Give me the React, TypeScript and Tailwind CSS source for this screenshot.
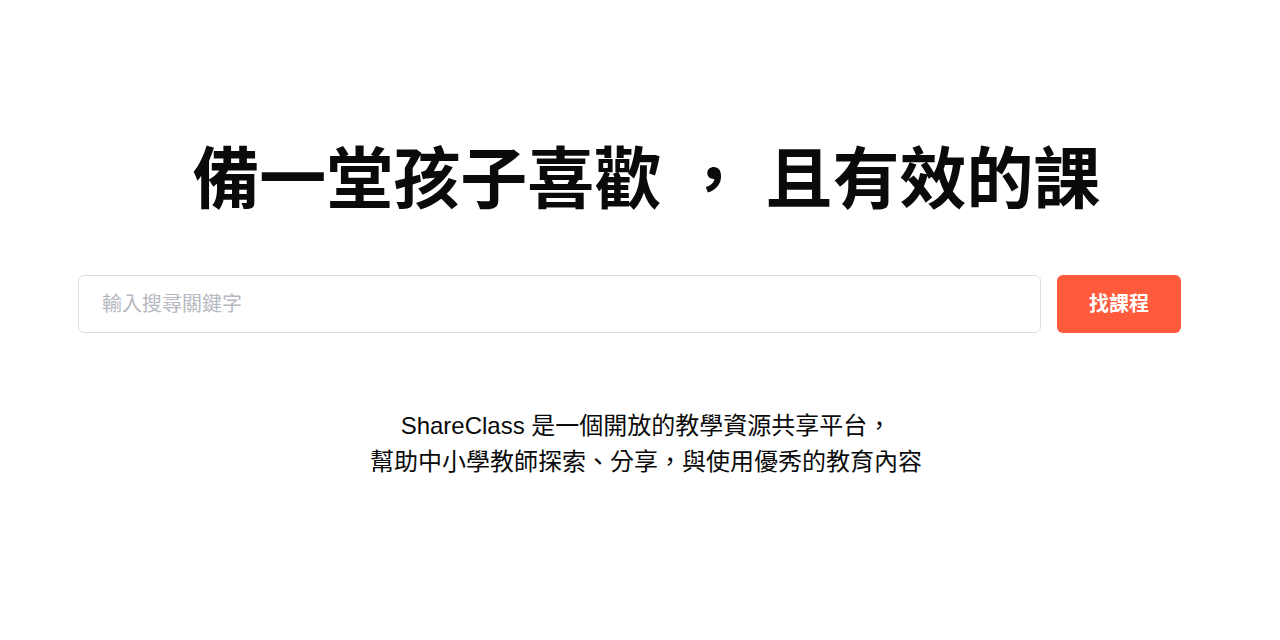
export default function App() {
  return (
    <div
      className="w-full h-[640px] bg-white text-[#0a0a0a]"
      style={{ fontFamily: '"Liberation Sans", "Noto Sans CJK TC", sans-serif' }}
    >
      <div className="pt-[146px] flex flex-col">
        <h1 className="text-center text-[67px] leading-none font-bold pl-[13px] whitespace-pre">
          備一堂孩子喜歡 ， 且有效的課
        </h1>

        <div className="mt-[62px] flex gap-4 pl-[78px] pr-[99px]">
          <input
            type="text"
            placeholder="輸入搜尋關鍵字"
            className="flex-1 h-[58px] rounded-md border border-[#dcdce4] px-[23px] text-[20px] placeholder:text-[#b6b8c0] outline-none"
          />
          <button className="w-[124px] h-[58px] rounded-md bg-[#ff5a3c] text-white text-[20px] font-bold">
            找課程
          </button>
        </div>

        <p className="mt-[75px] text-center text-[24px] leading-[36px] pl-[12px]">
          ShareClass 是一個開放的教學資源共享平台，
          <br />
          幫助中小學教師探索、分享，與使用優秀的教育內容
        </p>
      </div>
    </div>
  )
}
